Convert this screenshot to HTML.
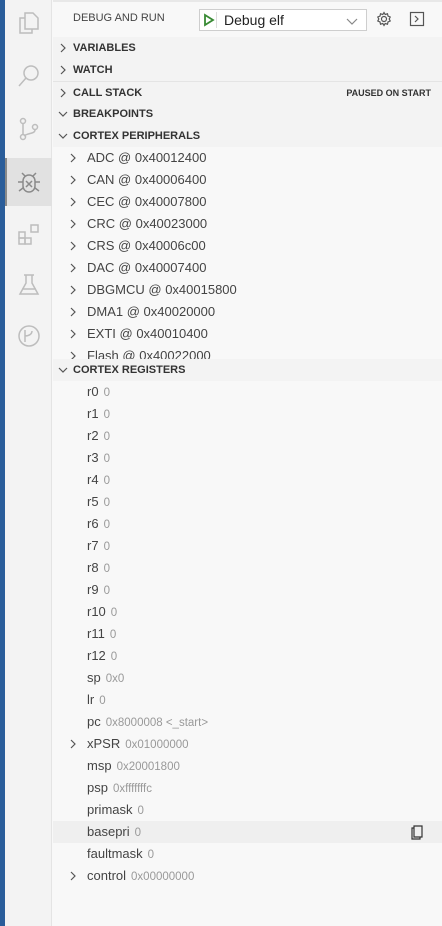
<!DOCTYPE html>
<html><head><style>
*{margin:0;padding:0;box-sizing:border-box}
body{width:442px;height:926px;overflow:hidden;background:#f8f8f8;font-family:"Liberation Sans","DejaVu Sans",sans-serif;color:#333;position:relative}
.blue{position:absolute;left:0;top:0;width:5px;height:926px;background:#2a5d9a}
.act{position:absolute;left:5px;top:0;width:47px;height:926px;background:#f3f3f3;border-right:1px solid #e4e4e4}
.act .sel{position:absolute;left:0;top:158px;width:47px;height:48px;background:#e1e1e1;border-left:2px solid #8a8a8a}
.act svg{position:absolute;left:11px}
.main{position:absolute;left:53px;top:0;right:0;bottom:0}
.topline{position:absolute;left:0;right:0;top:0;height:2px;background:#e8e8e8}
.title{position:absolute;left:20px;top:12px;font-size:11px;color:#444}
.dd{position:absolute;left:146px;top:9px;width:168px;height:22px;border:1px solid #cecece;background:#fff}
.dd .sep{position:absolute;left:16px;top:2px;width:1px;height:16px;background:#ddd}
.dd .t{position:absolute;left:24px;top:2px;font-size:14px;color:#222}
.hdr{position:absolute;left:0;right:0;height:22px;background:#f3f3f3;font-size:11px;font-weight:bold;color:#333;line-height:22px;padding-left:20px}
.hdr svg,.row svg.c{position:absolute;top:6px}
.hdr svg{left:5px}
.row{position:absolute;left:0;right:0;height:22px;line-height:22px;font-size:13px;color:#444}
.row svg.c{left:15px}
.row .n{position:absolute;left:34px}
.v{color:#999;font-size:11.5px;margin-left:5px}
</style></head><body>
<svg width="0" height="0" style="position:absolute"><defs>
<symbol id="r" viewBox="0 0 10 10"><path d="M3 1l4 4-4 4" fill="none" stroke="#555" stroke-width="1.2"/></symbol>
<symbol id="d" viewBox="0 0 10 10"><path d="M1 3l4 4 4-4" fill="none" stroke="#555" stroke-width="1.2"/></symbol>
</defs></svg>
<div class="blue"></div>
<div class="act">
<div class="sel"></div>
<svg width="26" height="26" style="top:10px" viewBox="0 0 26 26" fill="none" stroke="#bdbdbd" stroke-width="1.5"><path d="M9 3h8l5 5v11h-13z"/><path d="M9 8H4v15h12v-4"/></svg>
<svg width="26" height="26" style="top:63px" viewBox="0 0 26 26" fill="none" stroke="#bdbdbd" stroke-width="1.5"><circle cx="15" cy="10" r="7"/><path d="M10 15L3 23"/></svg>
<svg width="26" height="26" style="top:116px" viewBox="0 0 26 26" fill="none" stroke="#bdbdbd" stroke-width="1.5"><circle cx="7" cy="5" r="2.5"/><circle cx="7" cy="21" r="2.5"/><circle cx="19" cy="11" r="2.5"/><path d="M7 8v10M19 14c0 4-8 3-11 6"/></svg>
<svg width="26" height="26" style="top:169px" viewBox="0 0 26 26" fill="none" stroke="#8a8a8a" stroke-width="1.5"><path d="M7 12a6 6 0 0 1 12 0v5a6 6 0 0 1-12 0z"/><path d="M9 7l-3-3M17 7l3-3M7 13H2M19 13h5M7 19l-4 3M19 19l4 3M10 12l6 6M16 12l-6 6"/></svg>
<svg width="26" height="26" style="top:222px" viewBox="0 0 26 26" fill="none" stroke="#bdbdbd" stroke-width="1.5"><rect x="3" y="10" width="6" height="6"/><rect x="3" y="16" width="6" height="6"/><rect x="9" y="16" width="6" height="6"/><rect x="15" y="3" width="7" height="7"/></svg>
<svg width="26" height="26" style="top:272px" viewBox="0 0 26 26" fill="none" stroke="#bdbdbd" stroke-width="1.5"><path d="M10 3v8L4 22h18L16 11V3M8 3h10M6 17h14"/></svg>
<svg width="26" height="26" style="top:323px" viewBox="0 0 26 26" fill="none" stroke="#bdbdbd" stroke-width="1.5"><circle cx="13" cy="13" r="10"/><path d="M9 7v12M9 13c4 0 7-2 7-5"/></svg>
</div>
<div class="main">
<div class="topline"></div>
<div class="title">DEBUG AND RUN</div>
<div class="dd"><svg width="12" height="14" style="position:absolute;left:3px;top:3px" viewBox="0 0 12 14"><path d="M2 2l8 5-8 5z" fill="none" stroke="#388a34" stroke-width="1.8"/></svg><div class="sep"></div><div class="t">Debug elf</div><svg width="12" height="8" style="position:absolute;right:8px;top:8px" viewBox="0 0 12 8"><path d="M1 1l5 5 5-5" fill="none" stroke="#888" stroke-width="1.2"/></svg></div>
<svg width="16" height="16" style="position:absolute;left:323px;top:11px" viewBox="0 0 16 16" fill="none" stroke="#555" stroke-width="1.2"><circle cx="8" cy="8" r="2.5"/><path d="M8 1.5l1.2 2 2.3-.7.5 2.3 2.2.9-1 2 1 2-2.2.9-.5 2.3-2.3-.7L8 14.5l-1.2-2-2.3.7-.5-2.3-2.2-.9 1-2-1-2 2.2-.9.5-2.3 2.3.7z"/></svg>
<svg width="16" height="16" style="position:absolute;left:356px;top:11px" viewBox="0 0 16 16" fill="none" stroke="#555" stroke-width="1.2"><rect x="1.5" y="1.5" width="13" height="13"/><path d="M6 5l3 3-3 3"/></svg>

<div class="hdr" style="top:37px"><svg width="10" height="10"><use href="#r"/></svg>VARIABLES</div>
<div class="hdr" style="top:59px"><svg width="10" height="10"><use href="#r"/></svg>WATCH</div>
<div class="hdr" style="top:81px;border-top:1px solid #e4e4e4"><svg width="10" height="10"><use href="#r"/></svg>CALL STACK<span style="position:absolute;right:11px;font-size:9px">PAUSED ON START</span></div>
<div class="hdr" style="top:103px"><svg width="10" height="10"><use href="#d"/></svg>BREAKPOINTS</div>
<div class="hdr" style="top:125px"><svg width="10" height="10"><use href="#d"/></svg>CORTEX PERIPHERALS</div>

<div class="row" style="top:147px"><svg class="c" width="10" height="10"><use href="#r"/></svg><span class="n">ADC @ 0x40012400</span></div>
<div class="row" style="top:169px"><svg class="c" width="10" height="10"><use href="#r"/></svg><span class="n">CAN @ 0x40006400</span></div>
<div class="row" style="top:191px"><svg class="c" width="10" height="10"><use href="#r"/></svg><span class="n">CEC @ 0x40007800</span></div>
<div class="row" style="top:213px"><svg class="c" width="10" height="10"><use href="#r"/></svg><span class="n">CRC @ 0x40023000</span></div>
<div class="row" style="top:235px"><svg class="c" width="10" height="10"><use href="#r"/></svg><span class="n">CRS @ 0x40006c00</span></div>
<div class="row" style="top:257px"><svg class="c" width="10" height="10"><use href="#r"/></svg><span class="n">DAC @ 0x40007400</span></div>
<div class="row" style="top:279px"><svg class="c" width="10" height="10"><use href="#r"/></svg><span class="n">DBGMCU @ 0x40015800</span></div>
<div class="row" style="top:301px"><svg class="c" width="10" height="10"><use href="#r"/></svg><span class="n">DMA1 @ 0x40020000</span></div>
<div class="row" style="top:323px"><svg class="c" width="10" height="10"><use href="#r"/></svg><span class="n">EXTI @ 0x40010400</span></div>
<div class="row" style="top:345px;height:14px;overflow:hidden"><svg class="c" width="10" height="10"><use href="#r"/></svg><span class="n">Flash @ 0x40022000</span></div>
<div class="hdr" style="top:359px"><svg width="10" height="10"><use href="#d"/></svg>CORTEX REGISTERS</div>

<div class="row" style="top:381px"><span class="n">r0<span class="v">0</span></span></div>
<div class="row" style="top:403px"><span class="n">r1<span class="v">0</span></span></div>
<div class="row" style="top:425px"><span class="n">r2<span class="v">0</span></span></div>
<div class="row" style="top:447px"><span class="n">r3<span class="v">0</span></span></div>
<div class="row" style="top:469px"><span class="n">r4<span class="v">0</span></span></div>
<div class="row" style="top:491px"><span class="n">r5<span class="v">0</span></span></div>
<div class="row" style="top:513px"><span class="n">r6<span class="v">0</span></span></div>
<div class="row" style="top:535px"><span class="n">r7<span class="v">0</span></span></div>
<div class="row" style="top:557px"><span class="n">r8<span class="v">0</span></span></div>
<div class="row" style="top:579px"><span class="n">r9<span class="v">0</span></span></div>
<div class="row" style="top:601px"><span class="n">r10<span class="v">0</span></span></div>
<div class="row" style="top:623px"><span class="n">r11<span class="v">0</span></span></div>
<div class="row" style="top:645px"><span class="n">r12<span class="v">0</span></span></div>
<div class="row" style="top:667px"><span class="n">sp<span class="v">0x0</span></span></div>
<div class="row" style="top:689px"><span class="n">lr<span class="v">0</span></span></div>
<div class="row" style="top:711px"><span class="n">pc<span class="v">0x8000008 &lt;_start&gt;</span></span></div>
<div class="row" style="top:733px"><svg class="c" width="10" height="10"><use href="#r"/></svg><span class="n">xPSR<span class="v">0x01000000</span></span></div>
<div class="row" style="top:755px"><span class="n">msp<span class="v">0x20001800</span></span></div>
<div class="row" style="top:777px"><span class="n">psp<span class="v">0xfffffffc</span></span></div>
<div class="row" style="top:799px"><span class="n">primask<span class="v">0</span></span></div>
<div class="row" style="top:821px;background:#efefef"><span class="n">basepri<span class="v">0</span></span><svg width="14" height="16" style="position:absolute;left:357px;top:3px" viewBox="0 0 14 16" fill="none" stroke="#333" stroke-width="1.2"><path d="M4 2h8v11H4zM4 4H2v11h8v-2"/></svg></div>
<div class="row" style="top:843px"><span class="n">faultmask<span class="v">0</span></span></div>
<div class="row" style="top:865px"><svg class="c" width="10" height="10"><use href="#r"/></svg><span class="n">control<span class="v">0x00000000</span></span></div>
</div>
</body></html>
